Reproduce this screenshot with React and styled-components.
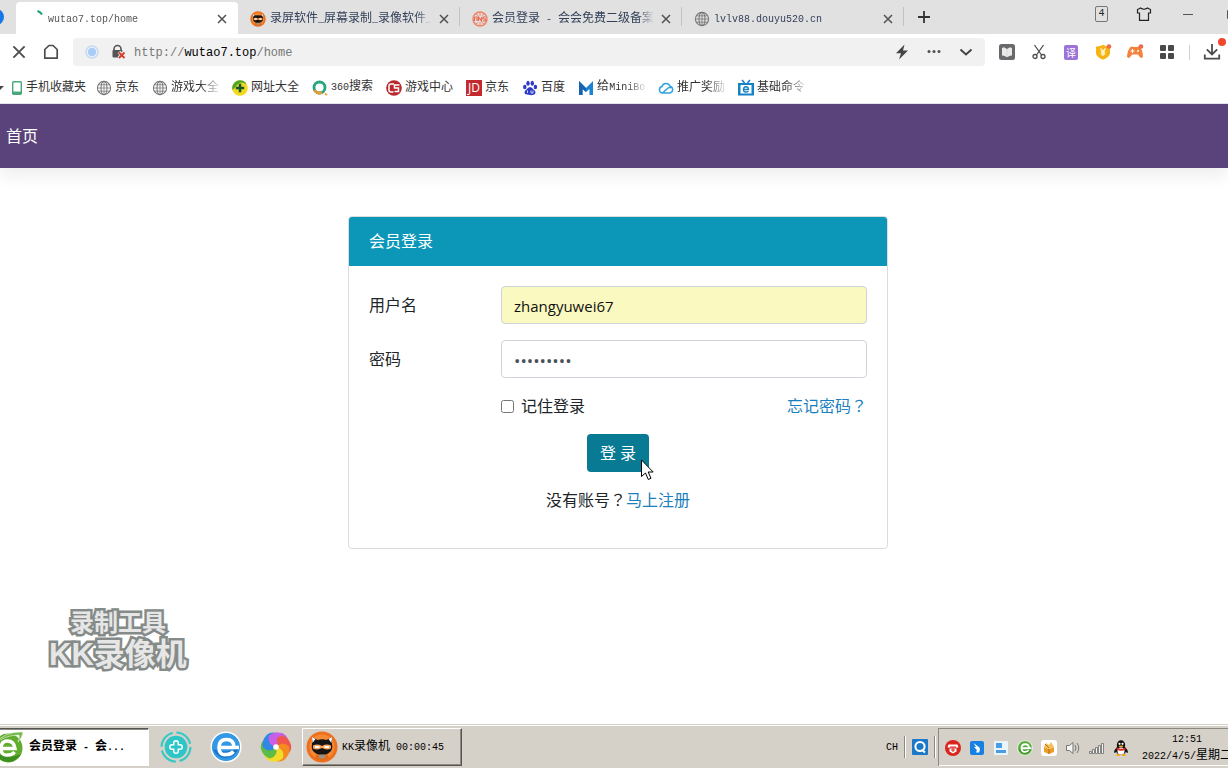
import React from "react";
import styled, { createGlobalStyle } from "styled-components";

const song = `"Liberation Mono", "Noto Sans CJK SC", monospace`;
const yahei = `"Open Sans", "Noto Sans CJK SC", sans-serif`;

const Global = createGlobalStyle`
  * { box-sizing: border-box; }
  body { margin: 0; background: #fff; font-family: ${yahei}; font-size: 16px; line-height: 24px; color: #212529; overflow: hidden; }
  button { font: inherit; border: 0; background: none; padding: 0; color: inherit; }
  a { text-decoration: none; color: inherit; }
  svg { display: block; flex: none; overflow: visible; }
`;

const Screen = styled.div`
  min-height: 100vh;
  display: flex;
  flex-direction: column;
  overflow: hidden;
`;

/* ---------- mixed-script text of the desktop font ---------- */
const SongLine = styled.span`
  font-family: ${song};
  font-size: 12px;
  line-height: 16px;
  white-space: nowrap;
`;
const Latin = styled.span`
  font-size: 10px;
  white-space: pre;
`;
function Song({ children, ...rest }) {
  const parts = children.match(/[\x00-\x7f]+|[^\x00-\x7f]+/g);
  return (
    <SongLine {...rest}>
      {parts.map((p, i) => (/^[\x00-\x7f]/.test(p) ? <Latin key={i}>{p}</Latin> : p))}
    </SongLine>
  );
}

/* ---------- browser chrome ---------- */
const TabStrip = styled.header`
  display: flex;
  align-items: stretch;
  height: 34px;
  background: #e1e1e1;
  overflow: hidden;
`;
const PinnedTab = styled.div`
  flex: 0 0 16px;
  padding-top: 9px;
  overflow: hidden;
`;
const Tab = styled.div`
  flex: 0 1 222px;
  min-width: 0;
  display: flex;
  align-items: center;
  gap: 4px;
  margin-top: 2px;
  padding: 2px 8px 0 12px;
  color: ${(p) => (p.$active ? "#555" : "#34415a")};
  background: ${(p) => (p.$active ? "#fff" : "transparent")};
  border-radius: 4px 4px 0 0;
`;
const TabTitle = styled(Song)`
  flex: 1;
  overflow: hidden;
  mask-image: linear-gradient(to right, #000 calc(100% - 16px), transparent);
`;
const TabDivider = styled.i`
  flex: 0 0 1px;
  margin: 7px 0 8px -1px;
  background: #c2c2c2;
`;
const IconButton = styled.button`
  display: flex;
  align-items: center;
  justify-content: center;
  width: 16px;
  height: 20px;
  flex: none;
  color: ${(p) => p.$color || "#505050"};
`;
const NewTab = styled(IconButton)`
  align-self: center;
  margin-left: 12px;
`;
const WindowTools = styled.div`
  display: flex;
  align-items: center;
  gap: 28px;
  height: 28px;
  margin-left: auto;
  margin-right: -12px;
`;
const Badge = styled.span`
  width: 13px;
  height: 16px;
  border: 1px solid #777;
  border-radius: 2px;
  font: 10px/14px ${song};
  text-align: center;
  color: #222;
`;
const AddressRow = styled.div`
  display: flex;
  align-items: center;
  height: 36px;
  padding: 0 8px 0 11px;
  gap: 16px;
`;
const AddressBar = styled.div`
  flex: 1;
  min-width: 0;
  display: flex;
  align-items: center;
  gap: 12px;
  height: 28px;
  margin: 0 -2px;
  padding: 0 11px 0 12px;
  border-radius: 4px;
  background: #f1f1f1;
`;
const Url = styled.span`
  flex: 1;
  margin-left: -5px;
  padding-top: 2px;
  font: 12px/16px ${song};
  color: #777;
  b { font-weight: 400; color: #000; }
`;
const AddressTools = styled.div`
  display: flex;
  gap: 16px;
`;
const Rule = styled.i`
  width: 1px;
  height: 15px;
  margin: 0 -2px;
  background: #d0d0d0;
`;
const BookmarkBar = styled.nav`
  display: flex;
  align-items: center;
  gap: 10px;
  height: 34px;
  padding-top: 2px;
  border-bottom: 1px solid #e9e2f5;
  color: #333;
`;
const BookmarkGroup = styled.div`
  display: flex;
  align-items: center;
  gap: ${(p) => p.$gap}px;
`;
const Bookmark = styled.a`
  display: flex;
  align-items: center;
  gap: 3px;
`;
const BookmarkText = styled(Song)`
  max-width: 60px;
  overflow: hidden;
  ${(p) => p.$fade && "max-width: 48px; mask-image: linear-gradient(to right, #000 60%, rgba(0,0,0,.15));"}
`;

/* ---------- web page ---------- */
const Navbar = styled.nav`
  position: relative;
  display: flex;
  align-items: center;
  height: 64px;
  padding: 0 6px;
  background: #5a437a;
  color: #fff;
  box-shadow: 0 8px 16px rgba(0, 0, 0, 0.07);
`;
const Main = styled.main`
  flex: 1;
  position: relative;
  padding: 48px 0 48px 8px;
`;
const Card = styled.form`
  max-width: 540px;
  margin: 0 auto;
  border: 1px solid #dcdcdc;
  border-radius: 4px;
  overflow: hidden;
`;
const CardHeader = styled.h1`
  margin: 0;
  padding: 12px 20px 13px;
  background: #0c97b9;
  color: #fff;
  font-size: 16px;
  font-weight: 400;
  line-height: 24px;
`;
const CardBody = styled.div`
  display: flex;
  flex-direction: column;
  gap: 16px;
  padding: 20px 20px 36px;
`;
const Field = styled.div`
  display: grid;
  grid-template-columns: 132px 1fr;
  align-items: center;
`;
const Input = styled.input`
  width: 100%;
  height: 38px;
  padding: 8px 12px 6px;
  border: 1px solid #ced4da;
  border-radius: 4px;
  outline: 0;
  font: 15px/24px ${yahei};
  color: ${(p) => (p.$filled ? "#111" : "#495057")};
  background: ${(p) => (p.$filled ? "#faf9c0" : "#fff")};
  &[type="password"] { font-size: 17px; }
`;
const Options = styled.div`
  display: flex;
  justify-content: space-between;
  height: 24px;
  margin-left: 132px;
`;
const Remember = styled.label`
  display: flex;
  align-items: center;
  gap: 7px;
`;
const Tick = styled.input`
  width: 13px;
  height: 13px;
  margin: 0;
`;
const Link = styled.a`
  color: #1c7fbd;
`;
const Mark = styled.span`
  font-family: "Noto Sans CJK TC", sans-serif;
  line-height: 16px;
`;
const Submit = styled.button`
  position: relative;
  align-self: center;
  height: 38px;
  padding: 0 13px;
  border-radius: 4px;
  background: #097a94;
  color: #fff;
`;
const Pointer = styled.svg`
  position: absolute;
  right: -5px;
  bottom: -9px;
`;
const SignUp = styled.p`
  margin: 0;
  text-align: center;
`;
const Watermark = styled.div`
  position: absolute;
  left: 49px;
  bottom: 53px;
  display: flex;
  flex-direction: column;
  align-items: center;
  font-family: "Liberation Sans", "Noto Sans CJK SC", sans-serif;
  font-weight: 700;
  color: #e6e6e6;
  -webkit-text-stroke: 5px #858b88;
  stroke-linejoin: round;
  paint-order: stroke fill;
`;
const WatermarkLine = styled.span`
  font-size: ${(p) => p.$size}px;
  line-height: 32px;
  white-space: nowrap;
`;

/* ---------- taskbar ---------- */
const Taskbar = styled.footer`
  display: flex;
  align-items: center;
  height: 44px;
  padding-top: 1px;
  background: #d5d1c8;
  border-top: 1px solid #d5d1c8;
  box-shadow: inset 0 1px #fff;
  color: #000;
  overflow: hidden;
`;
const TaskButton = styled.button`
  display: flex;
  align-items: center;
  gap: 4px;
  height: 38px;
  width: ${(p) => p.$w}px;
  flex: none;
  overflow: hidden;
  padding-left: 3px;
  border: 1px solid;
  border-color: #fff #555 #555 #fff;
  box-shadow: inset -1px -1px #8c8981;
  ${(p) =>
    p.$pressed &&
    `background: #fff; font-weight: 700; border-color: #555 #fff #fff #555; box-shadow: inset 0 1px #8c8981;
     border-left: 0; padding-left: 0;
     svg { margin-left: -9px; }`}
`;
const QuickLaunch = styled.div`
  display: flex;
  gap: 18px;
  padding: 0 10px 0 11px;
`;
const Language = styled.div`
  display: flex;
  align-items: center;
  gap: 6px;
  margin-left: auto;
  margin-right: 2px;
`;
const Groove = styled.i`
  width: 2px;
  height: 22px;
  border-left: 1px solid #8c8981;
  border-right: 1px solid #fff;
`;
const Tray = styled.div`
  display: flex;
  align-items: center;
  gap: 8px;
  height: 38px;
  flex: 0 0 290px;
  min-width: 0;
  padding-left: 6px;
  border: solid #8c8981;
  border-width: 1px 0 0 1px;
  box-shadow: inset 0 -1px #fff;
`;
const Clock = styled.time`
  display: flex;
  flex-direction: column;
  flex: none;
  align-items: center;
  margin-left: 5px;
`;

/* ---------- icons ---------- */
const Svg = ({ s = 16, h, vb, children, ...rest }) => (
  <svg width={s} height={h || s} viewBox={vb || "0 0 16 16"} fill="none" aria-hidden="true" {...rest}>
    {children}
  </svg>
);
const Close = ({ s = 10, w = 1.5 }) => (
  <Svg s={s} vb="0 0 10 10" stroke="currentColor" strokeWidth={w}><path d="M1 1l8 8M9 1l-8 8" /></Svg>
);
const Globe = () => (
  <Svg stroke="#777" strokeWidth="1.1">
    <circle cx="8" cy="8" r="6.6" /><ellipse cx="8" cy="8" rx="3" ry="6.6" /><path d="M8 1.4v13.2M1.4 8h13.2M2.4 4.8h11.2M2.4 11.2h11.2" strokeWidth=".8" />
  </Svg>
);
const Ninja = ({ s = 16 }) => (
  <Svg s={s} vb="0 0 32 32">
    <circle cx="16" cy="16" r="15.5" fill="#ee6f1d" />
    <circle cx="16" cy="16" r="12.5" fill="#f58a32" />
    <path d="M6 6l5.500 3q4.500-1.500 9 0L26 6v7.500q1 4-1.500 7Q21 24 16 24t-8.500-3.500q-2.500-3-1.500-7z" fill="#171414" />
    <path d="M6 6l3.500 2L6.500 12zM26 6l-3.500 2 3 4z" fill="#fff" />
    <path d="M7 14.500q4.500-2 9 .5 4.500-2.500 9-.5v3q-4.500 2-9-.5-4.500 2.500-9 .5z" fill="#f9a65d" />
    <path d="M9 16h4.500M18.500 16H23" stroke="#fff" strokeWidth="1.800" />
    <path d="M10 23.500q6 2.500 12 0l1 4q-7 4-14 0z" fill="#e26b16" />
    <rect x="13" y="23.500" width="6" height="4" rx="1" fill="#9b9186" />
  </Svg>
);
const BlueDot = () => <Svg s={4} h={16} vb="12 0 4 16"><circle cx="8" cy="8" r="8" fill="#1677e8" /></Svg>;
const Spinner = () => <Svg><path d="M9.500 0q3 1 4.500 3.500" stroke="#16a075" strokeWidth="2" /></Svg>;
const RedRing = () => (
  <Svg>
    <circle cx="8" cy="8" r="7" stroke="#f08468" strokeWidth="1.500" />
    <path d="M3 2.500l3 2M13 2.500l-3 2M8 1v4M3 13.500l3-2M13 13.500l-3-2M8 11v4" stroke="#f08468" />
    <path d="M2.500 10V6M2.500 6h2.500v4M6.500 10V6l3 4V6M14 6h-3v2h2.500v2H11" stroke="#ea6c50" strokeWidth="1.200" />
  </Svg>
);
const Home = () => (
  <Svg stroke="#4d4d4d" strokeWidth="1.700"><path d="M1.800 5.500L6 1.500h4l4.200 4v8.700H1.800z" strokeLinejoin="round" /></Svg>
);
const SiteDot = () => (
  <Svg s={14}><circle cx="8" cy="8" r="7" stroke="#c0d7f6" strokeWidth="1.500" /><circle cx="8" cy="8" r="4.800" fill="#a9ccf9" /></Svg>
);
const Lock = () => (
  <Svg>
    <path d="M3 7V5a3.500 3.500 0 017 0v2" stroke="#555" strokeWidth="1.600" /><rect x="1.500" y="6" width="10" height="7.500" rx="1" fill="#555" />
    <path d="M8 8l5.500 6M13.500 8L8 14" stroke="#f1f1f1" strokeWidth="3.500" /><path d="M8 8.500l5.500 5.500M13.500 8.500L8 14" stroke="#d33b2c" strokeWidth="1.800" />
  </Svg>
);
const Bolt = () => <Svg><path d="M10.500.5L2 9.200h5L5 15.500 14 6.500H9z" fill="#444" /></Svg>;
const Dots = () => <Svg><g fill="#505050"><circle cx="3" cy="7.500" r="1.500" /><circle cx="8" cy="7.500" r="1.500" /><circle cx="13" cy="7.500" r="1.500" /></g></Svg>;
const Down = () => <Svg stroke="#444" strokeWidth="2"><path d="M2.500 5.500L8 10.500l5.500-5" /></Svg>;
const Book = () => (
  <Svg><rect width="16" height="16" rx="2.500" fill="#68696d" /><path d="M3 4l2-.8L8 5l3-1.800 2 .8v7.500l-2 .2-3 1.500-3-1.500-2-.2z" fill="#e9e9e9" /><path d="M8 5v8" stroke="#ccc" strokeWidth=".6" /></Svg>
);
const Scissors = () => (
  <Svg stroke="#4c4c4c" strokeWidth="1.300"><path d="M3.500 1l7 10M12.500 1l-7 10" /><circle cx="4" cy="12.500" r="2" /><circle cx="12" cy="12.500" r="2" /></Svg>
);
const TranslateBox = styled.span`
  width: 14px;
  height: 15px;
  border-radius: 2px;
  background: #9b74d8;
  color: #fff;
  font: 10px/15px "Noto Sans CJK SC", sans-serif;
  text-align: center;
`;
const Shield = () => (
  <Svg><path d="M8 .8q3 2 7 1.700v7Q14 13.500 8 15.800 2 13.500 1 9.500v-7q4 .3 7-1.700z" fill="#f6b314" /><path d="M5.500 4.500L8 7.500l2.500-3M8 7.500v4.500M5.800 8h4.400M5.800 10h4.400" stroke="#fff5d0" strokeWidth="1.300" /><circle cx="14" cy="2.500" r="2.300" fill="#ef6a51" /></Svg>
);
const Gamepad = () => (
  <Svg><path d="M3.500 3q2-.8 3.500 0h3q1.500-.8 3 0 2.700 3 3 9.500-1.500 3-4-.5l-1-1.500H5L4 12q-2.500 3.500-4 .5Q.5 6 3.500 3z" fill="#f5823a" /><path d="M5.500 5v4M3.500 7h4" stroke="#fff" strokeWidth="1.200" /><circle cx="11" cy="7" r="1" fill="#fff" /><circle cx="14" cy="2.500" r="2.300" fill="#ee6850" /></Svg>
);
const Grid = () => (
  <Svg><g fill="#4a4a4a"><rect x="1" y="1" width="6" height="6" rx="1" /><rect x="9" y="1" width="6" height="6" rx="1" /><rect x="1" y="9" width="6" height="6" rx="1" /><rect x="9" y="9" width="6" height="6" rx="1" /></g></Svg>
);
const Download = () => (
  <Svg><path d="M8 0v10.500M2.800 5.300L8 10.500l5.200-5.200M.8 10.500v4.200h14.400v-4.200" stroke="#4c4c4c" strokeWidth="1.800" /><circle cx="18" cy="-2" r="4" fill="#f0472e" /></Svg>
);
const Shirt = () => (
  <Svg stroke="#222" strokeWidth="1.200"><path d="M4.500 2L1.500 3.500V7h2v7.300h9V7h2V3.500L11.500 2Q8 4.500 4.500 2z" /></Svg>
);
const Phone = () => (
  <Svg s={12} h={16} vb="0 0 12 16"><rect x="1.700" y="1.700" width="8.600" height="12.600" rx="1" stroke="#48a77b" strokeWidth="1.400" /><path d="M1.700 12.800h8.600" stroke="#48a77b" strokeWidth="2.500" /></Svg>
);
const GreenPlus = () => (
  <Svg><circle cx="8" cy="8" r="7.800" fill="#f4d921" /><path d="M.5 10A7.800 7.800 0 0111 .8q3 1.500 3.500 4Q9 0 5 5q-3 4-4.500 5z" fill="#4aa62d" /><path d="M8 3.800v8.400M3.800 8h8.400" stroke="#14582a" strokeWidth="2.600" /></Svg>
);
const Search360 = () => (
  <Svg><circle cx="7.500" cy="7.500" r="5.500" stroke="#27a57c" strokeWidth="2.800" /><path d="M2.700 10.200a5.500 5.500 0 007.300 2.300" stroke="#e99c35" strokeWidth="2.800" /><path d="M13 13.500l2 1.500" stroke="#f2a23d" strokeWidth="2" /></Svg>
);
const GameRed = () => (
  <Svg><circle cx="8" cy="8" r="7.800" fill="#b9282c" /><path d="M8 4H5q-2 0-2 2v4q0 2 2 2h2.500M13.500 5H8.500v3h4v3.500h-4" stroke="#fff" strokeWidth="1.500" /></Svg>
);
const JdBox = styled.span`
  width: 16px;
  height: 16px;
  background: #c22a2e;
  color: #fff;
  font: 12px/16px "Open Sans", sans-serif;
  text-align: center;
`;
const Paw = () => (
  <Svg><g fill="#2f3bc4"><ellipse cx="2.800" cy="7" rx="1.700" ry="2.200" /><ellipse cx="6" cy="3.200" rx="1.700" ry="2.500" /><ellipse cx="10.300" cy="3.200" rx="1.700" ry="2.500" /><ellipse cx="13.400" cy="7" rx="1.700" ry="2.200" /><path d="M8 7q2 0 3.500 2.500 3 2 1.500 4.500-1.500 1.500-5 1T3 14q-1.500-2.500 1.500-4.500Q6 7 8 7z" /></g><path d="M5.500 10.500v2.500M9 10.500V13h2v-2.500" stroke="#dfe2ff" strokeWidth=".9" /></Svg>
);
const MLogo = () => <Svg><path d="M1 1l7 7 7-7v14h-3.500V9L8 12 4.500 9v6H1z" fill="#1a83d2" /><path d="M1 1l7 7v4L4.500 9v6H1z" fill="#1664af" /></Svg>;
const Cloud = () => (
  <Svg stroke="#2fa4dc" strokeWidth="1.500"><path d="M4.500 13a3.300 3.300 0 01-.5-6.500 4.200 4.200 0 018-.3A3.500 3.500 0 0112 13zM4.500 13l5-4.500q2-1.500 3.500-.5" /></Svg>
);
const TvE = () => (
  <Svg><path d="M4 0l2.500 3M12 0L9.500 3" stroke="#1781c5" strokeWidth="1.600" /><rect y="3" width="16" height="12.500" fill="#1781c5" /><rect x="2.500" y="5" width="11" height="8.500" fill="#fff" /><path d="M5.500 9.500h5Q10.500 6.700 8 6.700T5.500 9.500 8 12q1.500 0 2.500-.8" stroke="#1781c5" strokeWidth="1.400" /></Svg>
);
const BrowserE = ({ s, c1, c2 }) => (
  <Svg s={s} vb="0 0 32 32">
    <circle cx="16" cy="16" r="14.800" fill={c1} stroke="#fff" strokeWidth="1.500" />
    <path d="M3 18q13 6 26-2a13.500 13.500 0 01-26 2z" fill={c2} />
    <path d="M9 16.500H29M24 16.500Q24 8.500 16.500 8.500T9 16.500t7.500 7q4.500 0 7-3" stroke="#fff" strokeWidth="3.600" />
  </Svg>
);
const GreenE = () => (
  <Svg s={34} vb="0 0 34 34">
    <circle cx="17" cy="18" r="14.500" fill="#62ad2d" /><path d="M4 22a14 14 0 0026 2q-13 6-26-2z" fill="#3d8e20" />
    <path d="M10.500 18.500H24Q23 11 16.500 11T10 18.500t7 6.500q4.500 0 6.500-3" stroke="#fff" strokeWidth="3.400" />
    <path d="M3 14Q14 1 32 2q-1 6-5 10 2-5 1-7Q14 5 3 14z" fill="#72b847" stroke="#e9f4df" strokeWidth=".6" />
  </Svg>
);
const TealPlus = () => (
  <Svg s={32} vb="0 0 32 32">
    <circle cx="16" cy="16" r="14.500" stroke="#35c9c5" strokeWidth="2" strokeDasharray="19 3.780" /><circle cx="16" cy="16" r="11.300" fill="#2cc6c8" />
    <path d="M16 12v8M12 16h8" stroke="#fff" strokeWidth="6" strokeLinecap="round" /><path d="M16 12v8M12 16h8" stroke="#2cc6c8" strokeWidth="3" strokeLinecap="round" />
  </Svg>
);
const blade = "M16 16Q7 14 9 5Q14 0 22 2Q27 4 28 9Q20 7 16 16z";
const Pinwheel = () => (
  <Svg s={32} vb="0 0 32 32">
    <defs><clipPath id="first-half"><path d="M0 0h17v16H0z" /></clipPath></defs>
    {["#c760e6", "#f0584c", "#f58a23", "#f3dc27", "#5dbb46", "#3186e6"].map((c, i) => (
      <path key={c} d={blade} fill={c} transform={`rotate(${i * 60} 16 16)`} />
    ))}
    <path d={blade} fill="#c760e6" clipPath="url(#first-half)" />
    <circle cx="16" cy="16" r="2.800" fill="#fff" />
  </Svg>
);
const QIcon = () => (
  <Svg><rect width="16" height="16" rx="1" fill="#1c78c8" /><circle cx="8" cy="7.500" r="4.600" stroke="#fff" strokeWidth="2" /><path d="M9.500 10.500l3.500 3" stroke="#fff" strokeWidth="2" /></Svg>
);
const RedMask = () => (
  <Svg><circle cx="8" cy="8" r="8" fill="#d9251d" /><path d="M3.500 4.500h9l1 3H2.500zM4.500 8.500h7v3L8 13.500l-3.500-2z" fill="#fff" /><path d="M5 7h6M8 8v4M6 10h4" stroke="#d9251d" /></Svg>
);
const BlueBird = () => <Svg><rect x="1" y="1" width="14" height="14" rx="2" fill="#1681e2" /><path d="M4.500 3l6 4.500q1 2-.5 5H7l1-2.500-3-3h2z" fill="#fff" /></Svg>;
const Doc = () => <Svg><rect x="1" y="1" width="14" height="14" rx="1" fill="#e9f4fc" /><path d="M3 3h6v5H3zM3 10h10v3H3z" fill="#489de3" /></Svg>;
const Box = () => (
  <Svg><rect width="16" height="16" rx="3" fill="#fff" /><path d="M3 7l5 2 5-2v5l-5 2-5-2z" fill="#eb9d25" /><path d="M3 7l2-4 3 2 2-3 3 5-5 2z" fill="#f4bf57" /><path d="M8 9v5M4 4l4 4" stroke="#b7651b" /></Svg>
);
const Speaker = () => (
  <Svg stroke="#777" strokeWidth="1"><path d="M1.500 5.500h3L8 2.500v11l-3.500-3h-3z" fill="#f4f4f2" /><path d="M10 5q2 3 0 6M12 3q3.500 5 0 10" /></Svg>
);
const Signal = () => (
  <Svg stroke="#777" strokeWidth=".9"><path d="M.5 11.500h2v2h-2zM3.500 9.500h2v4h-2zM6.500 7.500h2v6h-2zM9.500 5.500h2v8h-2zM12.500 3.500h2v10h-2z" fill="#f2f2ee" /></Svg>
);
const Penguin = () => (
  <Svg>
    <ellipse cx="8" cy="5" rx="4.200" ry="4.700" fill="#111" /><path d="M4 7q-4 4-2.500 6 1 0 1.500-1.500 1 3 5 3t5-3q.5 1.500 1.500 1.500Q16 11 12 7z" fill="#111" />
    <ellipse cx="8" cy="11" rx="3.500" ry="3.500" fill="#fff" /><path d="M3.500 7.500Q8 10 12.500 7.500v2Q8 12 3.500 9.500z" fill="#e0262b" />
    <circle cx="6.500" cy="3.800" r="1.100" fill="#fff" /><circle cx="9.500" cy="3.800" r="1.100" fill="#fff" /><ellipse cx="8" cy="6.300" rx="2.300" ry=".9" fill="#f2a71f" /><path d="M3.500 15h3.500M9 15h3.500" stroke="#f2a71f" strokeWidth="1.800" />
  </Svg>
);

const tabs = [
  { title: "wutao7.top/home", icon: <Spinner />, active: true },
  { title: "录屏软件_屏幕录制_录像软件_", icon: <Ninja /> },
  { title: "会员登录 - 会会免费二级备案", icon: <RedRing /> },
  { title: "lvlv88.douyu520.cn", icon: <Globe /> },
];
const bookmarks = [
  { text: "京东", icon: <Globe /> },
  { text: "游戏大全", icon: <Globe />, fade: true },
  { text: "网址大全", icon: <GreenPlus /> },
  { text: "360搜索", icon: <Search360 /> },
  { text: "游戏中心", icon: <GameRed /> },
  { text: "京东", icon: <JdBox>JD</JdBox> },
  { text: "百度", icon: <Paw /> },
  { text: "给MiniBo", icon: <MLogo />, fade: true },
  { text: "推广奖励", icon: <Cloud />, fade: true },
  { text: "基础命令", icon: <TvE />, fade: true },
];

export default function App() {
  return (
    <Screen>
      <Global />
      <TabStrip>
        <PinnedTab><BlueDot /></PinnedTab>
        {tabs.map((t) => (
          <React.Fragment key={t.title}>
            <Tab $active={t.active}>
              {t.icon}
              <TabTitle>{t.title}</TabTitle>
              <IconButton aria-label="关闭标签页"><Close /></IconButton>
            </Tab>
            {!t.active && <TabDivider />}
          </React.Fragment>
        ))}
        <NewTab aria-label="新标签页" $color="#333">
          <Svg stroke="currentColor" strokeWidth="1.800"><path d="M8 2v12M2 8h12" /></Svg>
        </NewTab>
        <WindowTools>
          <Badge>4</Badge>
          <IconButton aria-label="皮肤"><Shirt /></IconButton>
          <IconButton aria-label="最小化"><Svg><path d="M3 8.500h10" stroke="#555" /></Svg></IconButton>
          <IconButton aria-label="最大化"><Svg stroke="#555"><path d="M3.500 4.500h8v8h-8z" /></Svg></IconButton>
        </WindowTools>
      </TabStrip>

      <AddressRow>
        <IconButton aria-label="停止"><Close s={14} w={1.4} /></IconButton>
        <IconButton aria-label="主页"><Home /></IconButton>
        <AddressBar>
          <SiteDot />
          <Lock />
          <Url>http://<b>wutao7.top</b>/home</Url>
          <AddressTools>
            <IconButton aria-label="极速模式"><Bolt /></IconButton>
            <IconButton aria-label="更多"><Dots /></IconButton>
            <IconButton aria-label="展开"><Down /></IconButton>
          </AddressTools>
        </AddressBar>
        <IconButton aria-label="阅读"><Book /></IconButton>
        <IconButton aria-label="截图"><Scissors /></IconButton>
        <IconButton aria-label="翻译"><TranslateBox>译</TranslateBox></IconButton>
        <IconButton aria-label="钱盾"><Shield /></IconButton>
        <IconButton aria-label="游戏"><Gamepad /></IconButton>
        <IconButton aria-label="扩展"><Grid /></IconButton>
        <Rule />
        <IconButton aria-label="下载"><Download /></IconButton>
      </AddressRow>

      <BookmarkBar>
        <BookmarkGroup $gap={7}>
          <Svg s={4} h={8} vb="4 0 4 8"><path d="M4 2h4L4 6z" fill="#444" /></Svg>
          <Bookmark href="#mobile"><Phone /><BookmarkText>手机收藏夹</BookmarkText></Bookmark>
        </BookmarkGroup>
        <BookmarkGroup $gap={13}>
          {bookmarks.map((b, i) => (
            <Bookmark key={i} href="#bookmark">{b.icon}<BookmarkText $fade={b.fade}>{b.text}</BookmarkText></Bookmark>
          ))}
        </BookmarkGroup>
      </BookmarkBar>

      <Navbar><a href="#home">首页</a></Navbar>

      <Main>
        <Card onSubmit={(e) => e.preventDefault()}>
          <CardHeader>会员登录</CardHeader>
          <CardBody>
            <Field>
              <label htmlFor="user">用户名</label>
              <Input id="user" type="text" defaultValue="zhangyuwei67" $filled />
            </Field>
            <Field>
              <label htmlFor="pass">密码</label>
              <Input id="pass" type="password" defaultValue="123456789" />
            </Field>
            <Options>
              <Remember><Tick type="checkbox" />记住登录</Remember>
              <Link href="#forgot">忘记密码<Mark>？</Mark></Link>
            </Options>
            <Submit type="submit">
              登 录
              <Pointer width="14" height="22" viewBox="0 0 14 22" aria-hidden="true">
                <path d="M1.500 1v16.500l4-3.500 2.800 6.500 2.700-1.200-2.800-6.300h5z" fill="#fff" stroke="#000" />
              </Pointer>
            </Submit>
            <SignUp>没有账号<Mark>？</Mark><Link href="#register">马上注册</Link></SignUp>
          </CardBody>
        </Card>
        <Watermark>
          <WatermarkLine $size={24}>录制工具</WatermarkLine>
          <WatermarkLine $size={31}>KK录像机</WatermarkLine>
        </Watermark>
      </Main>

      <Taskbar>
        <TaskButton $w={149} $pressed><GreenE /><Song>会员登录 - 会...</Song></TaskButton>
        <QuickLaunch>
          <TealPlus />
          <BrowserE s={32} c1="#3499e4" c2="#1c74cc" />
          <Pinwheel />
        </QuickLaunch>
        <TaskButton $w={160}><Ninja s={32} /><Song>KK录像机 00:00:45</Song></TaskButton>
        <Language>
          <Song>CH</Song>
          <Groove />
          <QIcon />
          <Groove />
        </Language>
        <Tray>
          <RedMask /><BlueBird /><Doc /><BrowserE s={16} c1="#56ae3a" c2="#3b8f25" /><Box /><Speaker /><Signal /><Penguin />
          <Clock><Song>12:51</Song><Song>2022/4/5/星期二</Song></Clock>
        </Tray>
      </Taskbar>
    </Screen>
  );
}
